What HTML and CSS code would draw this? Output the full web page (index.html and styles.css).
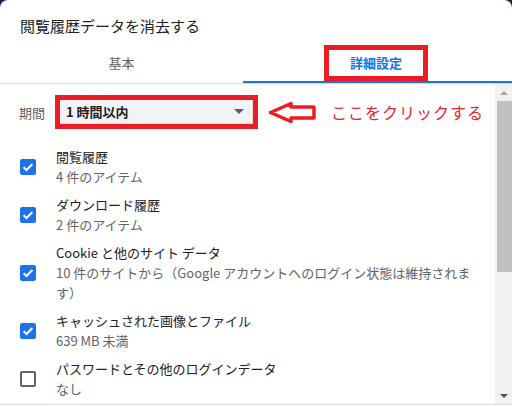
FILE: index.html
```html
<!DOCTYPE html>
<html lang="ja">
<head>
    <meta charset="UTF-8">
    <meta name="viewport" content="width=device-width, initial-scale=1.0">
    <title>閲覧履歴データを消去する</title>
    <link rel="stylesheet" href="styles.css">
</head>
<body>
    <div class="dialog">
        <h2 class="title">閲覧履歴データを消去する</h2>

        <div class="tabs">
            <div class="tab tab-basic">基本</div>
            <div class="tab tab-active"><span class="mark-box">詳細設定</span></div>
        </div>

        <div class="body">
            <div class="content">
                <div class="period-row">
                    <span class="period-label">期間</span>
                    <div class="select-mark">
                        <div class="select">
                            <span>1 時間以内</span>
                            <span class="select-arrow"></span>
                        </div>
                    </div>
                    <svg class="hint-arrow" width="48" height="23" viewBox="0 0 48 23">
                        <polygon points="2.5,11.5 23,2.5 23,6 46,6 46,17 23,17 23,20.5" fill="#fff" stroke="#ed1c24" stroke-width="3.5" stroke-linejoin="round"/>
                    </svg>
                    <span class="hint-text">ここをクリックする</span>
                </div>

                <ul class="items">
                    <li class="item">
                        <span class="checkbox checked"><svg width="16" height="16" viewBox="0 0 16 16"><path d="M3.6 8.2l2.9 2.8 5.9-6" fill="none" stroke="#fff" stroke-width="2"/></svg></span>
                        <div class="item-text">
                            <div class="item-name">閲覧履歴</div>
                            <div class="item-sub">4 件のアイテム</div>
                        </div>
                    </li>
                    <li class="item">
                        <span class="checkbox checked"><svg width="16" height="16" viewBox="0 0 16 16"><path d="M3.6 8.2l2.9 2.8 5.9-6" fill="none" stroke="#fff" stroke-width="2"/></svg></span>
                        <div class="item-text">
                            <div class="item-name">ダウンロード履歴</div>
                            <div class="item-sub">2 件のアイテム</div>
                        </div>
                    </li>
                    <li class="item">
                        <span class="checkbox checked"><svg width="16" height="16" viewBox="0 0 16 16"><path d="M3.6 8.2l2.9 2.8 5.9-6" fill="none" stroke="#fff" stroke-width="2"/></svg></span>
                        <div class="item-text">
                            <div class="item-name">Cookie と他のサイト データ</div>
                            <div class="item-sub">10 件のサイトから（Google アカウントへのログイン状態は維持されま<br>す）</div>
                        </div>
                    </li>
                    <li class="item">
                        <span class="checkbox checked"><svg width="16" height="16" viewBox="0 0 16 16"><path d="M3.6 8.2l2.9 2.8 5.9-6" fill="none" stroke="#fff" stroke-width="2"/></svg></span>
                        <div class="item-text">
                            <div class="item-name">キャッシュされた画像とファイル</div>
                            <div class="item-sub">639 MB 未満</div>
                        </div>
                    </li>
                    <li class="item">
                        <span class="checkbox"></span>
                        <div class="item-text">
                            <div class="item-name">パスワードとその他のログインデータ</div>
                            <div class="item-sub">なし</div>
                        </div>
                    </li>
                </ul>
            </div>

            <div class="scrollbar">
                <div class="scroll-btn"><span class="tri-up"></span></div>
                <div class="scroll-track">
                    <div class="scroll-thumb"></div>
                </div>
                <div class="scroll-btn"><span class="tri-down"></span></div>
            </div>
        </div>
    </div>
</body>
</html>
```

FILE: styles.css
```css
body {
    margin: 0;
    background-color: #15254a;
    font-family: "Noto Sans CJK JP", "Noto Sans", sans-serif;
    color: #202124;
}

.dialog {
    width: 512px;
    height: 407px;
    background-color: #fff;
    border-radius: 8px 8px 0 0;
    overflow: hidden;
}

.title {
    margin: 0;
    padding: 16px 20px 0;
    font-size: 15px;
    font-weight: normal;
    line-height: 20px;
}

/* Tabs */
.tabs {
    display: flex;
    border-bottom: 1px solid #dadce0;
}

.tab {
    padding-top: 9px;
    height: 36px;
    border-bottom: 2px solid transparent;
    font-size: 13px;
    text-align: center;
}

.tab-basic {
    width: 243px;
    line-height: 36px;
    color: #5f6368;
}

.tab-active {
    flex: 1;
    color: #1a73e8;
    font-weight: bold;
    border-bottom-color: #1a73e8;
}

.mark-box {
    display: inline-block;
    width: 94px;
    height: 26px;
    line-height: 26px;
    border: 5px solid #ed1c24;
    margin-left: -3px;
}

/* Body */
.body {
    display: flex;
    height: 320px;
    border-bottom: 1px solid #dadce0;
}

.content {
    flex: 1;
    overflow: hidden;
}

.period-row {
    display: flex;
    align-items: center;
    padding: 11px 0 0 19px;
}

.period-label {
    width: 36px;
    font-size: 13px;
    color: #5f6368;
}

.select-mark {
    border: 5px solid #ed1c24;
}

.select {
    display: flex;
    align-items: center;
    justify-content: space-between;
    width: 182px;
    height: 23px;
    padding: 0 4px 0 6px;
    background-color: #f1f3f4;
    font-size: 13px;
    font-weight: 600;
    color: #202124;
    border-right: 1px solid #e0e0e0;
    border-bottom: 1px solid #e0e0e0;
}

.select-arrow {
    width: 0;
    height: 0;
    border-left: 5px solid transparent;
    border-right: 5px solid transparent;
    border-top: 5px solid #5f6368;
    margin-right: 4px;
}

.hint-arrow {
    margin-left: 10px;
    display: block;
}

.hint-text {
    margin-left: 15px;
    font-size: 16px;
    color: #e8242c;
    letter-spacing: 1px;
}

/* Items */
.items {
    list-style: none;
    margin: 14px 0 0;
    padding: 0;
}

.item {
    display: flex;
    align-items: center;
    padding: 4px 0 4px 20px;
}

.checkbox {
    width: 16px;
    height: 16px;
    box-sizing: border-box;
    border: 2px solid #5f6368;
    border-radius: 2px;
    flex-shrink: 0;
    margin-right: 20px;
}

.checkbox.checked {
    border: none;
    background-color: #1a73e8;
}

.checkbox svg {
    display: block;
}

.item-text {
    font-size: 13px;
    line-height: 20px;
}

.item-sub {
    color: #5f6368;
}

/* Scrollbar */
.scrollbar {
    width: 17px;
    display: flex;
    flex-direction: column;
    background-color: #f1f1f1;
}

.scroll-btn {
    height: 17px;
    display: flex;
    align-items: center;
    justify-content: center;
}

.tri-up {
    width: 0;
    height: 0;
    border-left: 4px solid transparent;
    border-right: 4px solid transparent;
    border-bottom: 4px solid #a3a3a3;
}

.tri-down {
    width: 0;
    height: 0;
    border-left: 4px solid transparent;
    border-right: 4px solid transparent;
    border-top: 4px solid #505050;
}

.scroll-track {
    flex: 1;
}

.scroll-thumb {
    height: 171px;
    margin-left: 2px;
    background-color: #c1c1c1;
}
```
